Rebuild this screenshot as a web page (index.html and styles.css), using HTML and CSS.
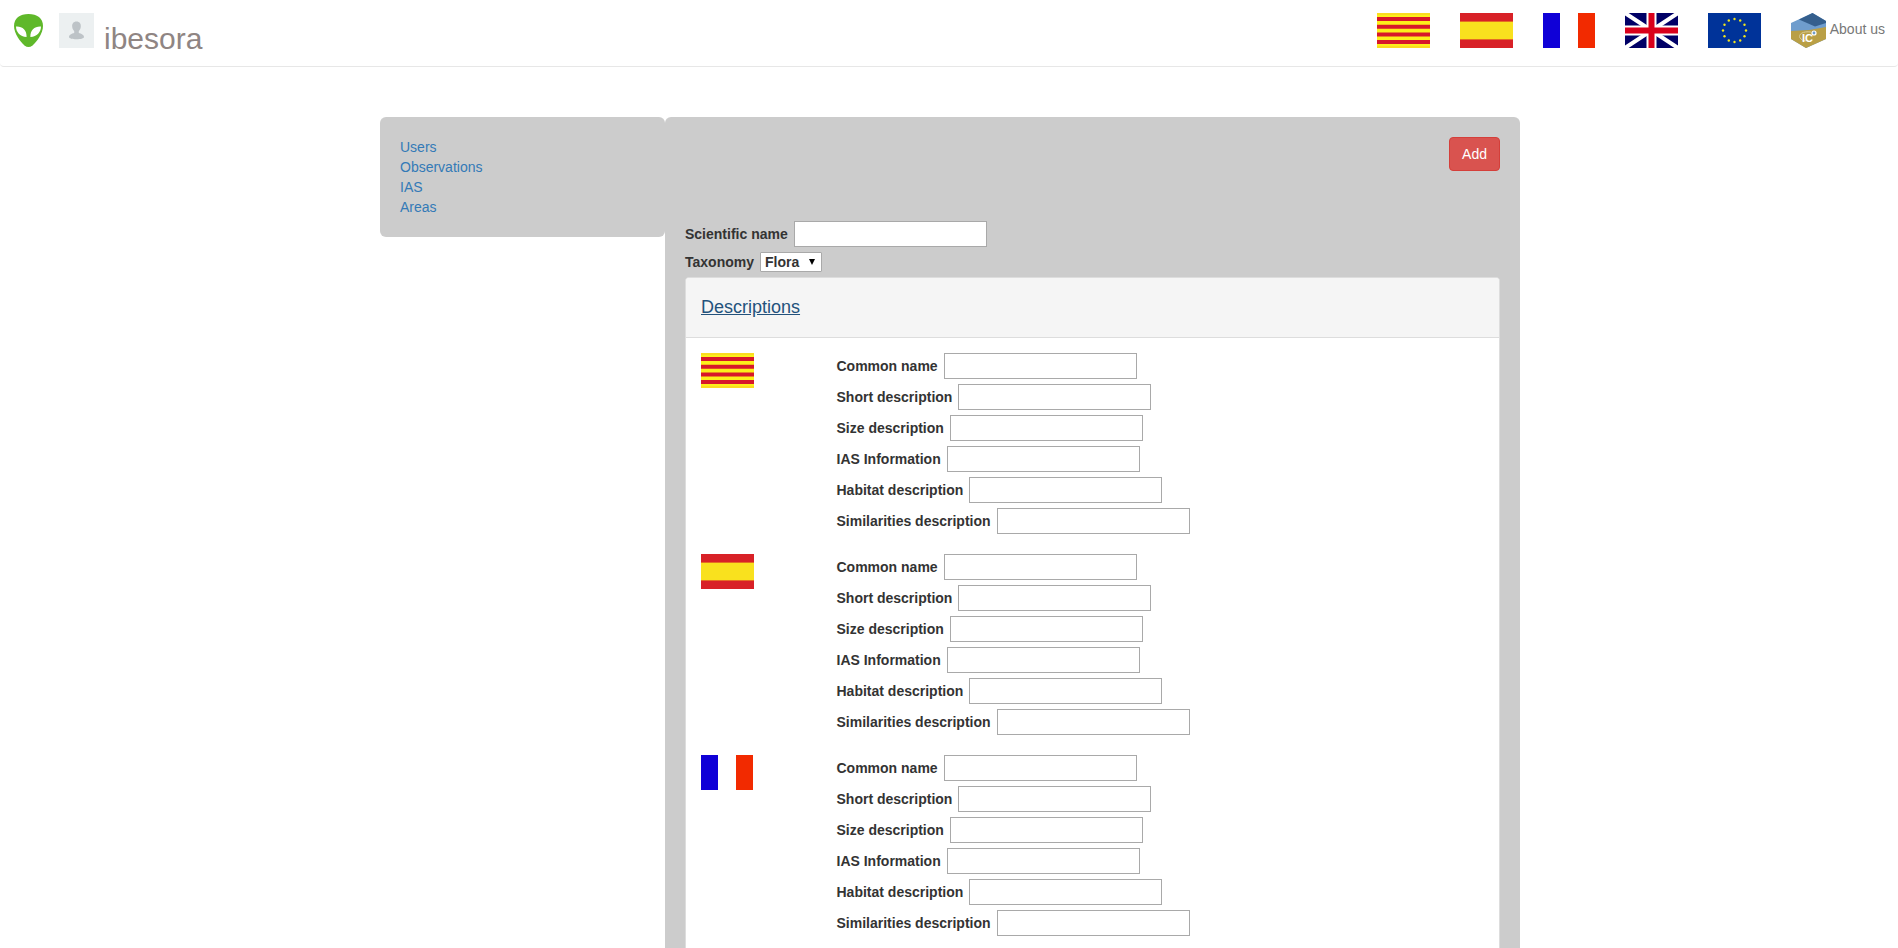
FILE: index.html
```html
<!DOCTYPE html>
<html lang="en">
<head>
<meta charset="utf-8">
<title>IAS</title>
<link rel="stylesheet" href="styles.css">
</head>
<body>
<svg class="sprites" aria-hidden="true">
  <symbol id="flag-ca" viewBox="0 0 53 35" preserveAspectRatio="none">
    <rect width="53" height="35" fill="#fcf01a"/>
    <path d="M0 6h53M0 13.7h53M0 21.4h53M0 29.1h53" stroke="#d7182a" stroke-width="4"/>
    <path d="M0 1h53M0 34h53" stroke="#fbdc20" stroke-width="2"/>
  </symbol>
  <symbol id="flag-es" viewBox="0 0 53 35" preserveAspectRatio="none">
    <rect width="53" height="35" fill="#d82127"/>
    <rect y="8.6" width="53" height="17.8" fill="#f9e11e"/>
  </symbol>
  <symbol id="flag-fr" viewBox="0 0 52 35" preserveAspectRatio="none">
    <rect width="52" height="35" fill="#fff"/>
    <rect width="17" height="35" fill="#0f00d7"/>
    <rect x="35" width="17" height="35" fill="#f22a00"/>
  </symbol>
  <symbol id="flag-uk" viewBox="0 0 53 35" preserveAspectRatio="none">
    <rect width="53" height="35" fill="#000066"/>
    <path d="M0 0L53 35M53 0L0 35" stroke="#fff" stroke-width="4"/>
    <path d="M26.500 0v35M0 17.500h53" stroke="#fff" stroke-width="10"/>
    <path d="M26.500 0v35M0 17.500h53" stroke="#d9001b" stroke-width="6"/>
  </symbol>
  <symbol id="flag-eu" viewBox="0 0 53 35" preserveAspectRatio="none">
    <rect width="53" height="35" fill="#003399"/>
    <g fill="#f2e51c">
      <circle cx="26.5" cy="6" r="1.2"/><circle cx="32.2" cy="7.5" r="1.2"/><circle cx="36.5" cy="11.7" r="1.2"/>
      <circle cx="38" cy="17.5" r="1.2"/><circle cx="36.5" cy="23.3" r="1.2"/><circle cx="32.2" cy="27.5" r="1.2"/>
      <circle cx="26.5" cy="29" r="1.2"/><circle cx="20.8" cy="27.5" r="1.2"/><circle cx="16.5" cy="23.3" r="1.2"/>
      <circle cx="15" cy="17.5" r="1.2"/><circle cx="16.5" cy="11.7" r="1.2"/><circle cx="20.8" cy="7.5" r="1.2"/>
    </g>
  </symbol>
</svg>

<header class="navbar">
  <div class="brand">
    <a class="brand-link" href="#" aria-label="Home">
      <svg class="alien" viewBox="0 0 29 33">
        <path d="M14.5 0C6 0 0 4 0 12c0 7 6 15.500 10.500 19.500Q14.500 34.500 18.500 31.500C23 27.500 29 19 29 12 29 4 23 0 14.500 0Z" fill="#5fb82a"/>
        <path d="M2 12.500C8 12 13 16 12.600 23 6 22.500 2 18 2 12.500ZM27 12.500C21 12 16 16 16.400 23 23 22.500 27 18 27 12.500Z" fill="#fff"/>
      </svg>
    </a>
    <svg class="avatar" viewBox="0 0 35 35" role="img" aria-label="User picture">
      <rect width="35" height="35" fill="#ecf0f1"/>
      <path d="M17.500 8.500c-3 0-4.600 2.200-4.300 5.200.2 2 1 3.300 2 4.300v2c-2.500.8-5.200 1.600-5.200 4 0 1.500 3.500 2.200 7.500 2.200s7.500-.7 7.500-2.200c0-2.400-2.700-3.200-5.200-4v-2c1-1 1.800-2.300 2-4.300.3-3-1.300-5.200-4.300-5.200Z" fill="#bdc3c7"/>
    </svg>
    <span class="username">ibesora</span>
  </div>
  <nav class="nav-right" aria-label="Languages">
    <a href="#" aria-label="Català"><svg class="flag"><use href="#flag-ca"/></svg></a>
    <a href="#" aria-label="Español"><svg class="flag"><use href="#flag-es"/></svg></a>
    <a href="#" aria-label="Français"><svg class="flag flag-fr"><use href="#flag-fr"/></svg></a>
    <a href="#" aria-label="English"><svg class="flag"><use href="#flag-uk"/></svg></a>
    <a href="#" aria-label="Europe"><svg class="flag"><use href="#flag-eu"/></svg></a>
    <a class="about" href="#">
      <svg class="logo" viewBox="0 0 35 35" aria-hidden="true">
        <path d="M0 10L21.500 0 35 8V26L15 35 0 26Z" fill="#6f9dcd"/>
        <path d="M8 6.500L21.500 0 35 8V10L24 13.500Z" fill="#355f8d"/>
        <path d="M0 18L18 17 35 14V26L15 35 0 26Z" fill="#b99f45"/>
        <path d="M20 19C12 18 7 21 9 25q2 3 6 3" fill="none" stroke="#d9cb98" stroke-width="1"/>
        <circle cx="23" cy="20" r="2" fill="#6f9dcd" stroke="#fff" stroke-width="1.200"/>
        <text class="logo-text" x="11" y="29">IC</text>
      </svg>
      <span>About us</span>
    </a>
  </nav>
</header>

<div class="page">
  <div class="container">
    <nav class="sidebar" aria-label="Admin">
      <a href="#">Users</a>
      <a href="#">Observations</a>
      <a href="#">IAS</a>
      <a href="#">Areas</a>
    </nav>
    <main class="content">
      <div class="toolbar"><button class="btn-add" type="button">Add</button></div>
      <form>
        <div class="field"><label for="sci">Scientific name</label><input id="sci" type="text"></div>
        <div class="field field-select">
          <label for="tax">Taxonomy</label>
          <span class="select-wrap">
            <select id="tax"><option>Flora</option><option>Fauna</option></select>
            <svg class="caret" viewBox="0 0 6 6" aria-hidden="true"><path d="M0 0h6L3 6Z"/></svg>
          </span>
        </div>
        <section class="panel">
          <h4 class="panel-heading"><a href="#descriptions">Descriptions</a></h4>
          <div class="panel-body" id="descriptions">
            <div class="lang-row">
              <svg class="flag" role="img" aria-label="Català"><use href="#flag-ca"/></svg>
              <div class="lang-fields">
                <div class="field"><label for="ca1">Common name</label><input id="ca1" type="text"></div>
                <div class="field"><label for="ca2">Short description</label><input id="ca2" type="text"></div>
                <div class="field"><label for="ca3">Size description</label><input id="ca3" type="text"></div>
                <div class="field"><label for="ca4">IAS Information</label><input id="ca4" type="text"></div>
                <div class="field"><label for="ca5">Habitat description</label><input id="ca5" type="text"></div>
                <div class="field"><label for="ca6">Similarities description</label><input id="ca6" type="text"></div>
              </div>
            </div>
            <div class="lang-row">
              <svg class="flag" role="img" aria-label="Español"><use href="#flag-es"/></svg>
              <div class="lang-fields">
                <div class="field"><label for="es1">Common name</label><input id="es1" type="text"></div>
                <div class="field"><label for="es2">Short description</label><input id="es2" type="text"></div>
                <div class="field"><label for="es3">Size description</label><input id="es3" type="text"></div>
                <div class="field"><label for="es4">IAS Information</label><input id="es4" type="text"></div>
                <div class="field"><label for="es5">Habitat description</label><input id="es5" type="text"></div>
                <div class="field"><label for="es6">Similarities description</label><input id="es6" type="text"></div>
              </div>
            </div>
            <div class="lang-row">
              <svg class="flag flag-fr" role="img" aria-label="Français"><use href="#flag-fr"/></svg>
              <div class="lang-fields">
                <div class="field"><label for="fr1">Common name</label><input id="fr1" type="text"></div>
                <div class="field"><label for="fr2">Short description</label><input id="fr2" type="text"></div>
                <div class="field"><label for="fr3">Size description</label><input id="fr3" type="text"></div>
                <div class="field"><label for="fr4">IAS Information</label><input id="fr4" type="text"></div>
                <div class="field"><label for="fr5">Habitat description</label><input id="fr5" type="text"></div>
                <div class="field"><label for="fr6">Similarities description</label><input id="fr6" type="text"></div>
              </div>
            </div>
          </div>
        </section>
      </form>
    </main>
  </div>
</div>
</body>
</html>
```
FILE: styles.css
```css
* {
  box-sizing: border-box;
}

html {
  scrollbar-width: none;
}

body {
  margin: 0;
  background: #fff;
  color: #333;
  font-family: "Liberation Sans", Arial, sans-serif;
  font-size: 14px;
  line-height: 20px;
}

a {
  color: #337ab7;
  text-decoration: none;
}

svg {
  display: block;
}

.sprites {
  position: absolute;
  width: 0;
  height: 0;
}

.navbar {
  display: flex;
  justify-content: space-between;
  padding: 13px 13px 18px 14px;
  border-bottom: 1px solid #e7e7e7;
  border-radius: 4px;
}

.brand,
.nav-right,
.about {
  display: flex;
}

.brand {
  align-items: flex-start;
}

.alien {
  width: 29px;
  height: 33px;
  margin: 1px 16px 0 0;
}

.avatar {
  width: 35px;
  height: 35px;
}

.username {
  height: 35px;
  margin-left: 10px;
  padding-top: 10px;
  color: #8f8583;
  font-size: 30px;
  line-height: 32px;
}

.nav-right {
  gap: 30px;
}

.flag {
  width: 53px;
  height: 35px;
}

.flag-fr {
  width: 52px;
}

.about {
  gap: 4px;
  color: #777;
  line-height: 32px;
}

.logo {
  width: 35px;
  height: 35px;
}

.logo-text {
  fill: #fff;
  font-size: 11px;
  font-weight: bold;
}

.page {
  padding: 50px 0 0 2px;
}

.container {
  display: grid;
  grid-template-columns: 1fr 3fr;
  align-items: start;
  max-width: 1140px;
  margin: 0 auto;
}

.sidebar,
.content {
  padding: 20px;
  background: #ccc;
  border-radius: 6px;
}

.sidebar {
  display: flex;
  flex-direction: column;
  align-items: flex-start;
}

.toolbar {
  display: flex;
  justify-content: flex-end;
  margin-bottom: 50px;
}

.btn-add {
  padding: 6px 12px;
  border: 1px solid #d43f3a;
  border-radius: 4px;
  background: #d9534f;
  color: #fff;
  font: inherit;
}

.field {
  display: flex;
  align-items: center;
  gap: 6px;
  margin-bottom: 5px;
}

.field label {
  font-weight: bold;
}

.field input {
  width: 193px;
  height: 26px;
  padding: 1px 2px;
  border: 1px solid #a9a9a9;
  background: #fff;
  font: inherit;
}

.select-wrap {
  position: relative;
}

.select-wrap select {
  display: block;
  width: 62px;
  height: 20px;
  padding: 0 4px;
  border: 1px solid #a9a9a9;
  border-radius: 1px;
  appearance: none;
  background: #fff;
  color: #333;
  font: inherit;
  font-weight: bold;
  line-height: 18px;
}

.caret {
  position: absolute;
  top: 7px;
  right: 7px;
  width: 6px;
  height: 6px;
  pointer-events: none;
}

.panel {
  border: 1px solid #ddd;
  border-radius: 4px;
  background: #fff;
}

.panel-heading {
  margin: 0;
  padding: 19px 15px 20px;
  border-bottom: 1px solid #ddd;
  border-radius: 3px 3px 0 0;
  background: #f5f5f5;
  font-size: 18px;
  font-weight: normal;
  line-height: 20px;
}

.panel-heading a {
  color: #23527c;
  text-decoration: underline;
}

.panel-body {
  padding: 15px 0;
}

.lang-row {
  display: grid;
  grid-template-columns: 1fr 5fr;
  margin-bottom: 15px;
}

.lang-row > * {
  margin-left: 15px;
}
```
